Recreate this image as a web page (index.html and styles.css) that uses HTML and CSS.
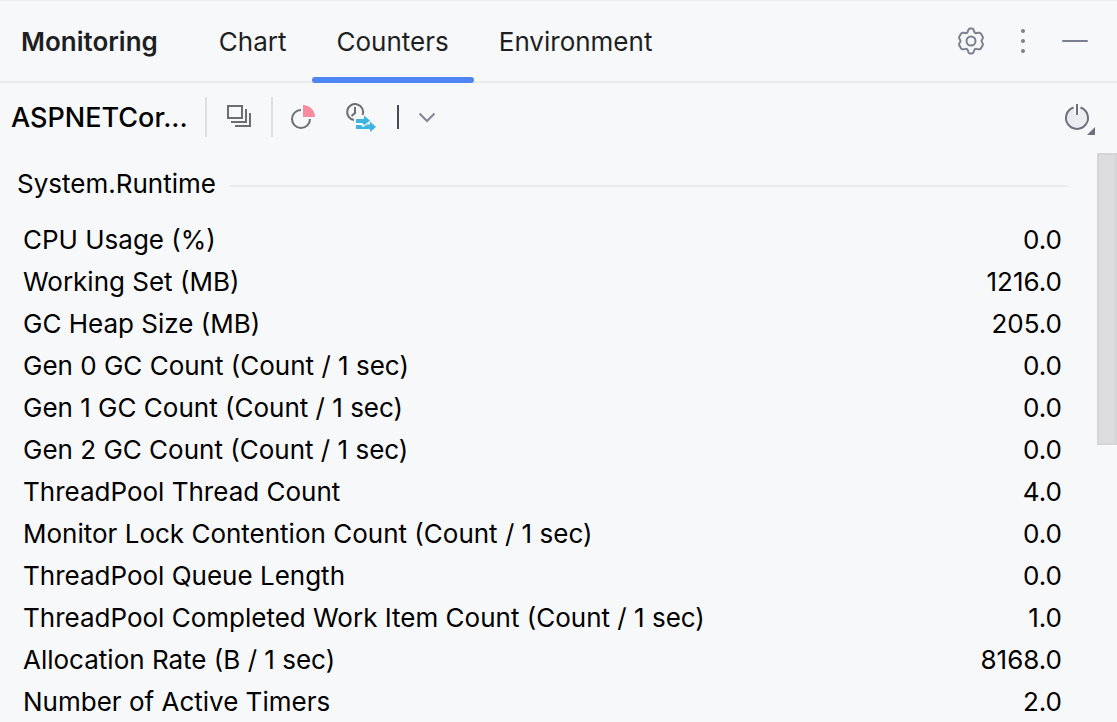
FILE: index.html
```html
<!DOCTYPE html>
<html lang="en">
<head>
<meta charset="utf-8">
<title>Monitoring</title>
<link rel="stylesheet" href="styles.css">
</head>
<body>
<main class="panel">
  <header class="header">
    <h1 class="title">Monitoring</h1>
    <nav class="tabs" role="tablist">
      <button class="tab" role="tab">Chart</button>
      <button class="tab tab-active" role="tab" aria-selected="true">Counters</button>
      <button class="tab" role="tab">Environment</button>
    </nav>
    <div class="header-actions">
      <button class="icon-button" aria-label="Settings">
        <svg width="32" height="32" viewBox="0 0 32 32" fill="none" stroke="#7b7f8f" stroke-width="2"><path d="M13.4 4.9Q14 3.5 15 3.5H17Q18 3.5 18.6 4.9L19.3 6.8Q19.9 8.4 21.6 8.1L23.8 7.8Q25.3 7.6 26 8.8L27.6 11.500Q28.400 12.800 27.500 14L26.800 15Q26.100 16 26.800 17L27.500 18Q28.400 19.200 27.600 20.500L26 23.200Q25.300 24.400 23.800 24.200L21.600 23.900Q19.900 23.600 19.300 25.200L18.600 27.100Q18 28.500 17 28.500H15Q14 28.500 13.400 27.100L12.700 25.200Q12.100 23.600 10.400 23.900L8.200 24.200Q6.700 24.400 6 23.200L4.400 20.500Q3.600 19.200 4.500 18L5.200 17Q5.900 16 5.200 15L4.500 14Q3.600 12.800 4.400 11.500L6 8.800Q6.700 7.600 8.200 7.800L10.400 8.100Q12.100 8.400 12.700 6.800Z"/><circle cx="16" cy="16" r="4.500"/></svg>
      </button>
      <button class="icon-button" aria-label="More options">
        <svg width="32" height="32" viewBox="0 0 32 32" fill="#7b7f8f"><circle cx="16" cy="6" r="2"/><circle cx="16" cy="16" r="2"/><circle cx="16" cy="26" r="2"/></svg>
      </button>
      <button class="icon-button" aria-label="Hide">
        <svg width="32" height="32" viewBox="0 0 32 32" stroke="#7b7f8f" stroke-width="2" stroke-linecap="round"><path d="M4 16H28"/></svg>
      </button>
    </div>
  </header>

  <div class="toolbar">
    <span class="process">ASPNETCor...</span>
    <span class="divider"></span>
    <button class="tool" aria-label="Processes">
      <svg width="32" height="32" viewBox="0 0 32 32" fill="none" stroke="#6e6e6e" stroke-width="2"><path d="M5 5H19V17H5ZM23 8V21H8M27 12V25H12"/></svg>
    </button>
    <span class="divider"></span>
    <button class="tool snapshot" aria-label="Memory snapshot">
      <svg width="32" height="32" viewBox="0 0 32 32"><path d="M14 9A9 9 0 1 0 23 18" fill="none" stroke="#6e6e6e" stroke-width="2"/><path d="M16 4A12 12 0 0 1 28 16H16Z" fill="#f98b9e"/></svg>
    </button>
    <button class="tool timeline" aria-label="Timeline profiling">
      <svg width="34" height="32" viewBox="0 0 34 32"><path d="M11 19A8 8 0 1 1 19.600 14M12 6V12L8.500 15" fill="none" stroke="#6e6e6e" stroke-width="2"/><path d="M13 18H21V14.500L27.500 20L21.500 25L19.500 22H13ZM13 24H18L20 26L24.500 23.500H27V20.500L33 26L27 31V28H13Z" fill="#3eb3e0"/><path d="M13 23H19L20.500 25L27 20" fill="none" stroke="#f7f8fa" stroke-width="1"/></svg>
    </button>
    <span class="mark"></span>
    <button class="tool chevron" aria-label="More profiling options">
      <svg width="32" height="32" viewBox="0 0 32 32" fill="none" stroke="#818594" stroke-width="2"><path d="M8.500 12.500L16 20L23.500 12.500"/></svg>
    </button>
    <button class="tool power" aria-label="Power options">
      <svg width="36" height="36" viewBox="0 0 36 36"><circle cx="17" cy="19" r="11" fill="#ebecf0"/><path d="M13.500 8.500A11 11 0 1 0 20.500 8.500" fill="none" stroke="#6c707e" stroke-width="2"/><path d="M17 5V16" stroke="#f7f8fa" stroke-width="6"/><path d="M17 5V16" stroke="#6c707e" stroke-width="2"/><path d="M35 28V36H27Z" fill="#6c707e"/></svg>
    </button>
  </div>

  <div class="content">
    <section class="counters">
      <h2 class="group">System.Runtime</h2>
      <table class="table">
        <tbody>
          <tr><th scope="row">CPU Usage (%)</th><td>0.0</td></tr>
          <tr><th scope="row">Working Set (MB)</th><td>1216.0</td></tr>
          <tr><th scope="row">GC Heap Size (MB)</th><td>205.0</td></tr>
          <tr><th scope="row">Gen 0 GC Count (Count / 1 sec)</th><td>0.0</td></tr>
          <tr><th scope="row">Gen 1 GC Count (Count / 1 sec)</th><td>0.0</td></tr>
          <tr><th scope="row">Gen 2 GC Count (Count / 1 sec)</th><td>0.0</td></tr>
          <tr><th scope="row">ThreadPool Thread Count</th><td>4.0</td></tr>
          <tr><th scope="row">Monitor Lock Contention Count (Count / 1 sec)</th><td>0.0</td></tr>
          <tr><th scope="row">ThreadPool Queue Length</th><td>0.0</td></tr>
          <tr><th scope="row">ThreadPool Completed Work Item Count (Count / 1 sec)</th><td>1.0</td></tr>
          <tr><th scope="row">Allocation Rate (B / 1 sec)</th><td>8168.0</td></tr>
          <tr><th scope="row">Number of Active Timers</th><td>2.0</td></tr>
        </tbody>
      </table>
    </section>
    <div class="scroll-track"><div class="scroll-thumb"></div></div>
  </div>
</main>
</body>
</html>
```

FILE: styles.css
```css
* { box-sizing: border-box; }

body {
  margin: 0;
  background: #f7f8fa;
  color: #000;
  font: 400 26px/42px Inter, "Liberation Sans", sans-serif;
}

button {
  padding: 0;
  border: 0;
  background: none;
  color: inherit;
  font: inherit;
}

svg { display: block; }

.panel {
  display: flex;
  flex-direction: column;
  height: 100vh;
  overflow: hidden;
  border-top: 1px solid #ebecf0;
}

.header {
  display: flex;
  flex: none;
  align-items: stretch;
  height: 82px;
  padding: 0 26px 0 21px;
  border-bottom: 2px solid #ebecf0;
  color: #1e1f22;
}

.title {
  margin: 0 36px 0 0;
  font-size: 26px;
  font-weight: 600;
  line-height: 82px;
}

.tabs { display: flex; }

.tab {
  position: relative;
  padding: 0 25px;
  line-height: 82px;
}

.tab-active::after {
  content: "";
  position: absolute;
  right: 0;
  bottom: -2px;
  left: 0;
  height: 6px;
  border-radius: 3px;
  background: #4f84f3;
}

.header-actions {
  display: flex;
  align-items: center;
  gap: 20px;
  margin-left: auto;
}

.toolbar {
  display: flex;
  flex: none;
  align-items: center;
  height: 70px;
  padding: 0 21px 2px 11px;
}

.process {
  width: 194px;
  padding-top: 2px;
  font-size: 27px;
  font-weight: 500;
}

.divider {
  width: 2px;
  height: 40px;
  background: #dfe0e3;
}

.tool { margin: 0 16px; }
.tool.snapshot { margin: 0 12px 0 14px; }
.tool.timeline { margin: 0 20px 0 12px; }

.mark {
  width: 2px;
  height: 24px;
  background: #494b57;
}

.tool.chevron { margin: 0 12px; }
.tool.power { margin: 0 0 0 auto; }

.content {
  display: flex;
  flex: 1;
  min-height: 0;
}

.counters {
  flex: 1;
  padding: 10px 28px 0 17px;
}

.group {
  display: flex;
  align-items: center;
  gap: 13px;
  margin: 0 0 14px;
  font-size: 26px;
  font-weight: 400;
}

.group::after {
  content: "";
  flex: 1;
  height: 2px;
  margin-top: 4px;
  background: #ebecee;
}

.table {
  width: 100%;
  border-collapse: collapse;
}

.table th {
  padding: 0 0 0 6px;
  font-weight: 400;
  text-align: left;
}

.table td {
  padding: 0 7px 0 0;
  text-align: right;
}

.scroll-track {
  flex: none;
  width: 20px;
}

.scroll-thumb {
  height: 292px;
  border: 2px solid #d5d5d7;
  background: #dcdcde;
}
```
